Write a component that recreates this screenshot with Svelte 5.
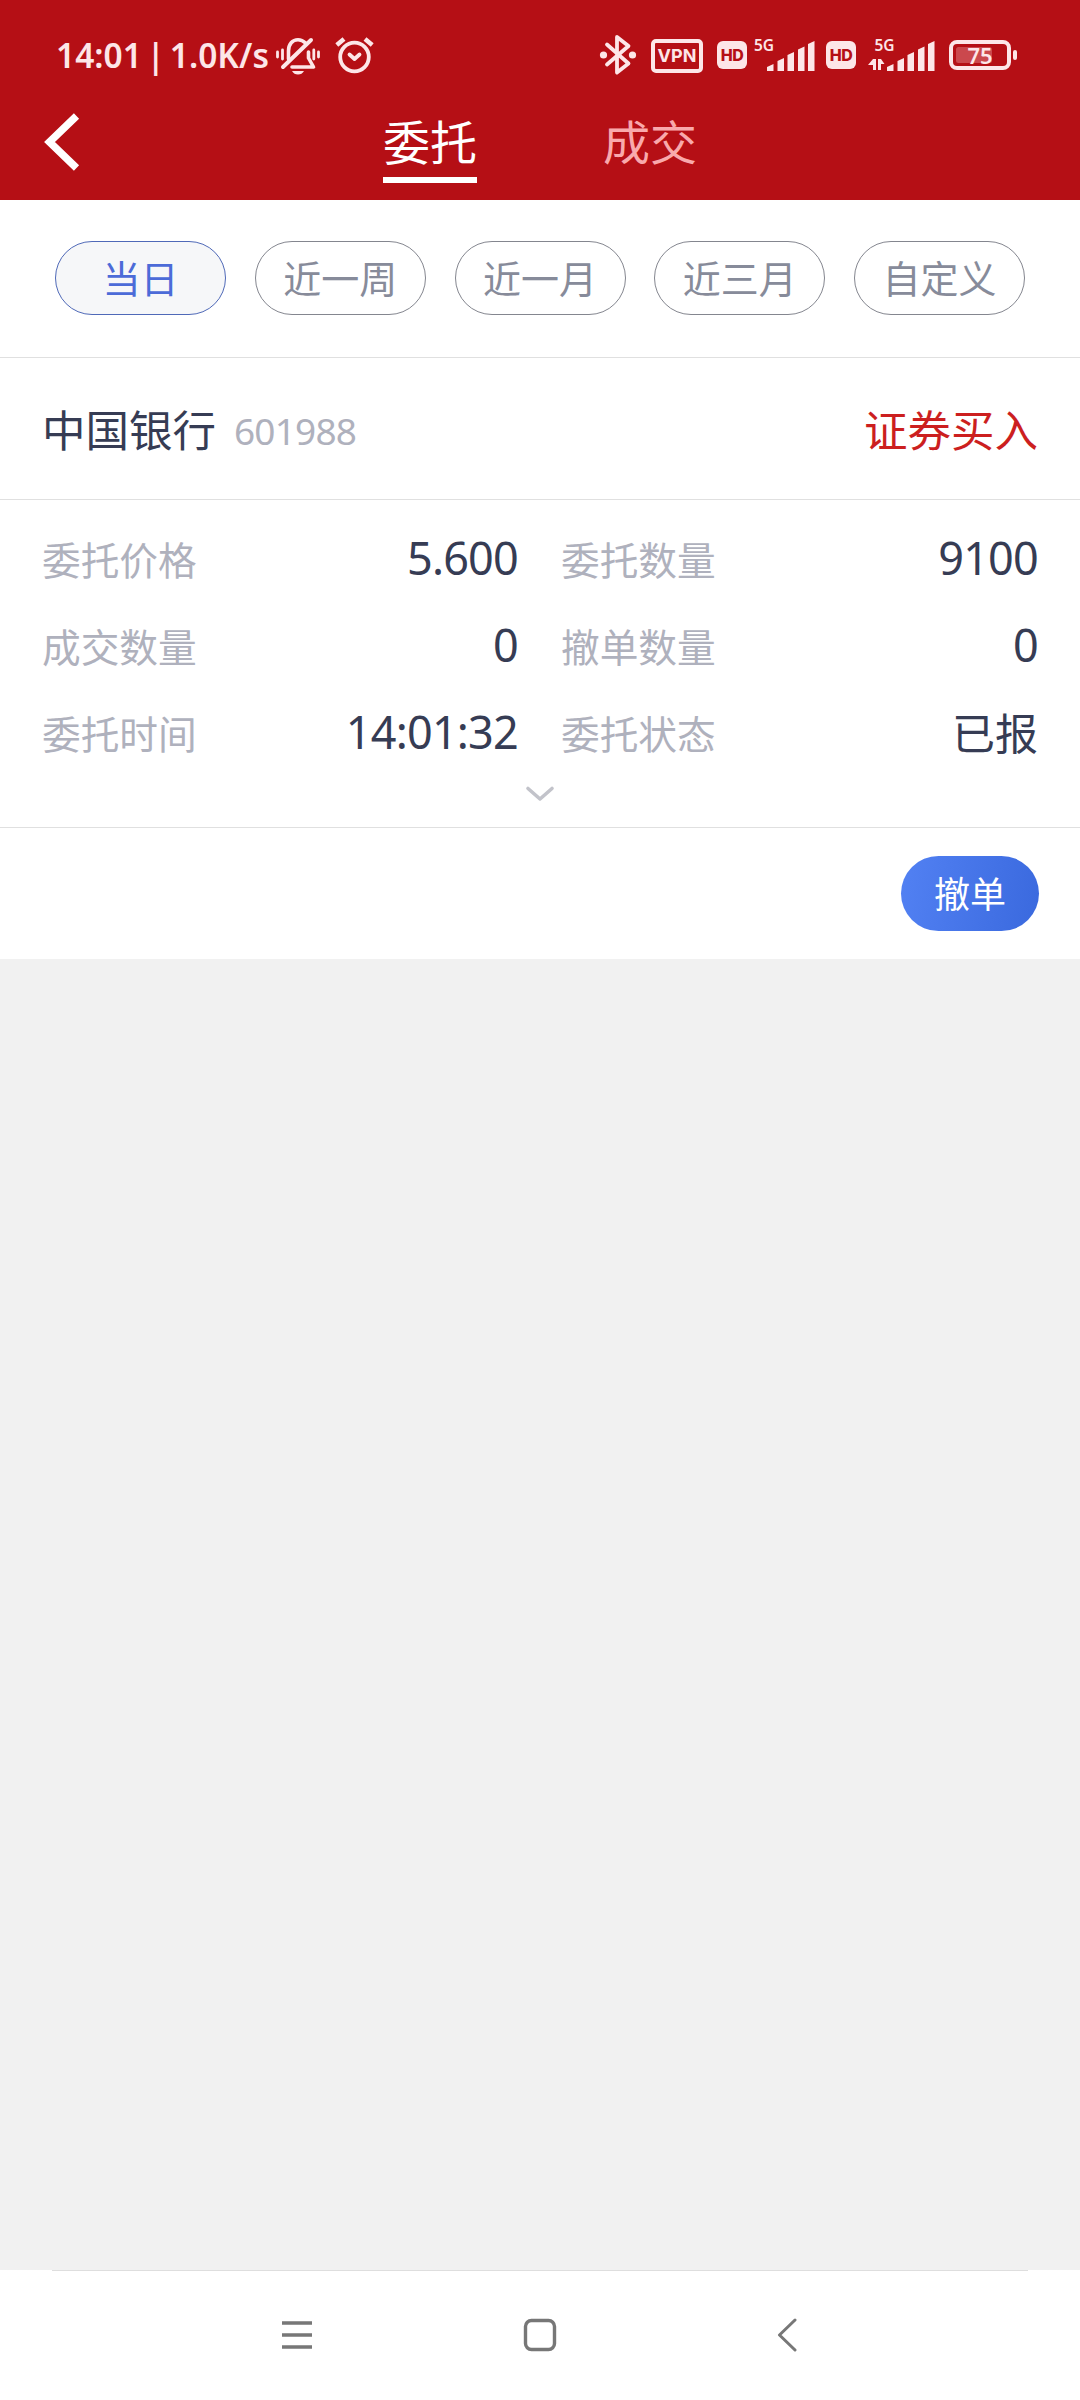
<script>
  let activeTab = '委托';
  let activeRange = '当日';

  const tabs = ['委托', '成交'];
  const ranges = ['当日', '近一周', '近一月', '近三月', '自定义'];

  const order = {
    name: '中国银行',
    code: '601988',
    side: '证券买入',
    fields: [
      { label: '委托价格', value: '5.600' },
      { label: '委托数量', value: '9100' },
      { label: '成交数量', value: '0' },
      { label: '撤单数量', value: '0' },
      { label: '委托时间', value: '14:01:32' },
      { label: '委托状态', value: '已报', text: true }
    ]
  };

  // x offset and top edge of each signal bar
  const bars = [
    [0, 24],
    [10.5, 18],
    [20.5, 12],
    [31, 6.5],
    [41, 1]
  ];
</script>

<svelte:head>
  <title>委托</title>
</svelte:head>

<main>
  <header>
    <div class="status-bar">
      <span class="clock">14:01 | 1.0K/s</span>
      <svg class="bell" viewBox="276 34 46 44" width="46" height="44">
        <g fill="none" stroke="currentColor" stroke-width="3.6" stroke-linecap="round">
          <path d="M288.5 59V51C288.5 44 292.5 39.7 298 39.7C301 39.7 303.5 41 305.5 43" />
          <path d="M283 67L311 40" stroke-width="4" />
          <path d="M308.5 52V58L313.5 67H292" stroke-linejoin="round" />
          <path d="M277.5 52V57M282.5 50V59M313.8 50V59M318.5 52V57" stroke-width="2.8" />
        </g>
        <path d="M292 71H304Q302 74.5 298 74.5T292 71Z" fill="currentColor" />
      </svg>
      <svg class="alarm" viewBox="334 34 42 44" width="42" height="44">
        <g fill="none" stroke="currentColor" stroke-width="3.8" stroke-linecap="round" stroke-linejoin="round">
          <circle cx="354.5" cy="57" r="14.3" />
          <path d="M349.5 54.5L354.5 59L359.5 54.5" />
          <path d="M336.8 45L344 39M365 39L372.2 45" stroke-linecap="butt" stroke-width="4.5" />
        </g>
      </svg>

      <div class="indicators">
        <svg viewBox="598 34 40 44" width="40" height="44">
          <path
            d="M607 44.5L628.5 63.5L617 72.5V37L628.5 46L607 64.5"
            fill="none" stroke="currentColor" stroke-width="3.8" stroke-linejoin="round" stroke-linecap="round"
          />
          <circle cx="603.5" cy="55" r="3.6" fill="currentColor" />
          <circle cx="632.5" cy="55" r="3.6" fill="currentColor" />
        </svg>
        <span class="vpn">VPN</span>
        <span class="hd">HD</span>
        <svg class="signal" viewBox="0 0 62 44" width="62" height="44">
          <text x="0" y="16.5">5G</text>
          {#each bars as [x, y]}
            <path d="M{x + 13} {y + 9}L{x + 19.5} {y + 6}V37H{x + 13}Z" />
          {/each}
        </svg>
        <span class="hd second">HD</span>
        <svg class="signal" viewBox="0 0 68 44" width="68" height="44">
          <text x="6.5" y="16.5">5G</text>
          <path d="M5 25H8V36H5V31H0ZM10 36V25H13L16.5 30H13V36Z" />
          {#each bars as [x, y]}
            <path d="M{x + 19} {y + 9}L{x + 25.5} {y + 6}V37H{x + 19}Z" />
          {/each}
        </svg>
        <svg class="battery" viewBox="948 34 70 44" width="70" height="44">
          <rect x="951" y="42" width="58" height="26" rx="6" fill="none" stroke="currentColor" stroke-width="4" />
          <rect x="956" y="47" width="36" height="16" rx="2.5" fill="#cb484d" />
          <rect x="1013" y="50" width="4" height="10" rx="2" fill="currentColor" />
          <text x="980" y="63.5">75</text>
        </svg>
      </div>
    </div>

    <nav class="title-bar">
      <button class="back" aria-label="返回">
        <svg viewBox="44 112 38 60" width="38" height="60">
          <path d="M76.5 116L49.5 142L76.5 168" fill="none" stroke="#fff" stroke-width="7.5" />
        </svg>
      </button>
      <div class="tabs">
        {#each tabs as tab}
          <button class="tab" class:active={tab === activeTab} on:click={() => (activeTab = tab)}>{tab}</button>
        {/each}
      </div>
    </nav>
  </header>

  <section class="ranges">
    {#each ranges as range}
      <button class="range" class:active={range === activeRange} on:click={() => (activeRange = range)}>{range}</button>
    {/each}
  </section>

  <section class="order">
    <div class="order-head">
      <span class="name">{order.name}</span>
      <span class="code">{order.code}</span>
      <span class="side">{order.side}</span>
    </div>

    <div class="order-body">
      <div class="fields">
        {#each order.fields as field}
          <div class="field">
            <span class="label">{field.label}</span>
            <span class="value" class:text={field.text}>{field.value}</span>
          </div>
        {/each}
      </div>
      <svg class="expand" viewBox="0 0 30 18" width="30" height="18">
        <path d="M3 3.5L15 14L27 3.5" fill="none" stroke="#c2c3ca" stroke-width="3.6" stroke-linecap="round" stroke-linejoin="round" />
      </svg>
    </div>

    <div class="order-actions">
      <button class="cancel">撤单</button>
    </div>
  </section>

  <footer>
    <svg viewBox="0 0 34 34" width="34" height="34">
      <path d="M2 5H32M2 17H32M2 29H32" stroke="currentColor" stroke-width="3.4" />
    </svg>
    <svg viewBox="0 0 34 34" width="34" height="34">
      <rect x="2.5" y="2.5" width="29" height="29" rx="6" fill="none" stroke="currentColor" stroke-width="3.4" />
    </svg>
    <svg viewBox="0 0 34 34" width="34" height="34">
      <path d="M26 2L10.5 17L26 32" fill="none" stroke="currentColor" stroke-width="3" stroke-linecap="round" stroke-linejoin="round" />
    </svg>
  </footer>
</main>

<style>
  :global(body) {
    margin: 0;
    background: #f1f1f1;
  }

  main {
    display: flex;
    flex-direction: column;
    width: 1080px;
    height: 2400px;
    background: #f1f1f1;
    font-family: 'Noto Sans', 'Noto Sans CJK SC', sans-serif;
    color: #363c54;
  }

  button {
    padding: 0;
    border: none;
    background: none;
    font-family: inherit;
    box-sizing: border-box;
  }

  svg {
    display: block;
    flex: none;
  }

  header {
    height: 200px;
    background: #b50f15;
  }

  .status-bar {
    display: flex;
    height: 44px;
    padding: 34px 0 0 56px;
    color: #fde6e8;
  }

  .clock {
    width: 213px;
    font-size: 33.5px;
    font-weight: 600;
    line-height: 43px;
    white-space: nowrap;
    word-spacing: -4px;
  }

  .bell {
    margin-left: 7px;
  }

  .alarm {
    margin-left: 12px;
  }

  .indicators {
    display: flex;
    align-items: center;
    margin-left: auto;
    padding-right: 62px;
  }

  .vpn,
  .hd {
    display: flex;
    align-items: center;
    justify-content: center;
    box-sizing: border-box;
    font-family: Inter, sans-serif;
    font-weight: 700;
  }

  .vpn {
    width: 52px;
    height: 34px;
    margin: 0 0 1px 13px;
    border: 4px solid currentColor;
    border-radius: 5px;
    font-size: 18px;
  }

  .hd {
    width: 30px;
    height: 28px;
    margin: 0 7px 2px 14px;
    border-radius: 6px;
    background: #fde6e8;
    color: #b50f15;
    font-size: 16px;
    letter-spacing: -0.5px;
    font-weight: 800;
  }

  .hd.second {
    margin-left: 10px;
    margin-right: 12px;
  }

  .signal {
    fill: currentColor;
  }

  .signal text {
    font: 600 15.5px 'Noto Sans', sans-serif;
  }

  .battery {
    margin-left: 12px;
  }

  .battery text {
    fill: currentColor;
    font: 600 22px 'Noto Sans', sans-serif;
    text-anchor: middle;
  }

  .title-bar {
    display: flex;
    height: 122px;
  }

  .back {
    width: 38px;
    height: 60px;
    margin: 34px 0 0 44px;
  }

  .tabs {
    display: flex;
    gap: 126px;
    margin-left: 301px;
  }

  .tab {
    height: 105px;
    padding-top: 30px;
    border-bottom: 6px solid transparent;
    color: #f9a9ac;
    font-size: 47px;
    line-height: 69px;
  }

  .tab.active {
    border-color: #fff;
    color: #fff;
  }

  .ranges {
    display: flex;
    justify-content: space-between;
    align-items: flex-start;
    height: 158px;
    padding: 41px 55px 0;
    box-sizing: border-box;
    background: #fff;
    border-bottom: 1px solid #e0e0e0;
  }

  .range {
    width: 171px;
    height: 74px;
    border: 1px solid #84868f;
    border-radius: 37px;
    color: #878b9a;
    font-size: 38px;
    line-height: 72px;
  }

  .range.active {
    border-color: #4f69b8;
    background: #f6f7f9;
    color: #4c6bd8;
  }

  .order {
    background: #fff;
  }

  .order-head {
    display: flex;
    align-items: center;
    height: 142px;
    padding: 0 42px;
    box-sizing: border-box;
    border-bottom: 1px solid #e0e0e0;
  }

  .name,
  .side {
    margin-top: -1px;
    font-size: 43.5px;
  }

  .code {
    margin: 4px 0 0 18px;
    color: #afb1bd;
    font-size: 37px;
    letter-spacing: -0.8px;
  }

  .side {
    margin-left: auto;
    color: #cc1f1f;
  }

  .order-body {
    height: 328px;
    padding: 17px 42px 0;
    box-sizing: border-box;
    border-bottom: 1px solid #e0e0e0;
  }

  .fields {
    display: grid;
    grid-template-columns: 476px 477px;
    column-gap: 43px;
  }

  .field {
    display: flex;
    justify-content: space-between;
    height: 87px;
    line-height: 87px;
  }

  .label {
    color: #afb1bd;
    font-size: 38.7px;
  }

  .value {
    font-size: 45px;
    line-height: 82px;
    letter-spacing: -0.8px;
  }

  .value.text {
    font-size: 43px;
    line-height: 85px;
    letter-spacing: 0;
  }

  .expand {
    margin: 7px auto 0;
  }

  .order-actions {
    display: flex;
    align-items: center;
    justify-content: flex-end;
    height: 131px;
    padding-right: 41px;
  }

  .cancel {
    width: 138px;
    height: 75px;
    border-radius: 37.5px;
    background: linear-gradient(100deg, #5281f3, #3a69de);
    color: #fff;
    font-size: 36px;
    line-height: 77px;
  }

  footer {
    display: flex;
    justify-content: space-between;
    height: 82px;
    margin-top: auto;
    padding: 48px 277px 0 280px;
    background: linear-gradient(#dedede, #dedede) 52px 0 / 976px 1px no-repeat #fff;
    color: #777;
  }

  footer svg:nth-child(2) {
    margin-right: 3px;
  }
</style>
